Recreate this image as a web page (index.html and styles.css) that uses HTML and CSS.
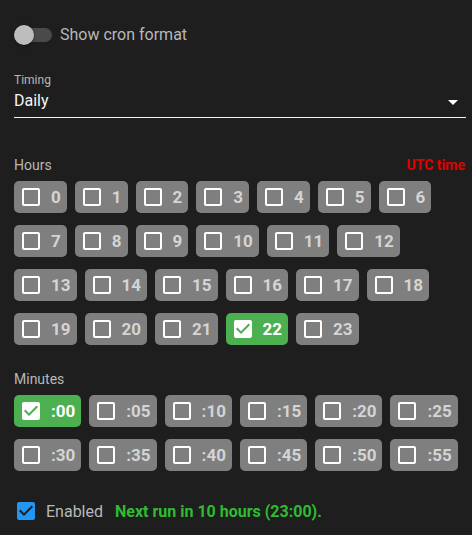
FILE: index.html
```html
<!DOCTYPE html>
<html>
<head>
<meta charset="utf-8">
<link rel="stylesheet" href="styles.css">
</head>
<body>
<div class="page">
  <div class="toggle-row">
    <span class="toggle"><span class="track"></span><span class="thumb"></span></span>
    <span class="toggle-label">Show cron format</span>
  </div>

  <div class="field">
    <div class="field-label">Timing</div>
    <div class="select">
      <span class="select-value">Daily</span>
      <svg class="arrow" viewBox="0 0 24 24" width="24" height="24"><path d="M7 10l5 5 5-5z" fill="#fff"/></svg>
    </div>
  </div>

  <div class="section-head hours-head">
    <span>Hours</span>
    <span class="utc">UTC time</span>
  </div>
  <div class="chips">
    <div class="chip"><svg class="cb" viewBox="0 0 24 24"><path d="M19 5v14H5V5h14m0-2H5c-1.1 0-2 .9-2 2v14c0 1.1.9 2 2 2h14c1.1 0 2-.9 2-2V5c0-1.1-.9-2-2-2z"/></svg><span>0</span></div>
    <div class="chip"><svg class="cb" viewBox="0 0 24 24"><path d="M19 5v14H5V5h14m0-2H5c-1.1 0-2 .9-2 2v14c0 1.1.9 2 2 2h14c1.1 0 2-.9 2-2V5c0-1.1-.9-2-2-2z"/></svg><span>1</span></div>
    <div class="chip"><svg class="cb" viewBox="0 0 24 24"><path d="M19 5v14H5V5h14m0-2H5c-1.1 0-2 .9-2 2v14c0 1.1.9 2 2 2h14c1.1 0 2-.9 2-2V5c0-1.1-.9-2-2-2z"/></svg><span>2</span></div>
    <div class="chip"><svg class="cb" viewBox="0 0 24 24"><path d="M19 5v14H5V5h14m0-2H5c-1.1 0-2 .9-2 2v14c0 1.1.9 2 2 2h14c1.1 0 2-.9 2-2V5c0-1.1-.9-2-2-2z"/></svg><span>3</span></div>
    <div class="chip"><svg class="cb" viewBox="0 0 24 24"><path d="M19 5v14H5V5h14m0-2H5c-1.1 0-2 .9-2 2v14c0 1.1.9 2 2 2h14c1.1 0 2-.9 2-2V5c0-1.1-.9-2-2-2z"/></svg><span>4</span></div>
    <div class="chip"><svg class="cb" viewBox="0 0 24 24"><path d="M19 5v14H5V5h14m0-2H5c-1.1 0-2 .9-2 2v14c0 1.1.9 2 2 2h14c1.1 0 2-.9 2-2V5c0-1.1-.9-2-2-2z"/></svg><span>5</span></div>
    <div class="chip"><svg class="cb" viewBox="0 0 24 24"><path d="M19 5v14H5V5h14m0-2H5c-1.1 0-2 .9-2 2v14c0 1.1.9 2 2 2h14c1.1 0 2-.9 2-2V5c0-1.1-.9-2-2-2z"/></svg><span>6</span></div>
    <div class="chip"><svg class="cb" viewBox="0 0 24 24"><path d="M19 5v14H5V5h14m0-2H5c-1.1 0-2 .9-2 2v14c0 1.1.9 2 2 2h14c1.1 0 2-.9 2-2V5c0-1.1-.9-2-2-2z"/></svg><span>7</span></div>
    <div class="chip"><svg class="cb" viewBox="0 0 24 24"><path d="M19 5v14H5V5h14m0-2H5c-1.1 0-2 .9-2 2v14c0 1.1.9 2 2 2h14c1.1 0 2-.9 2-2V5c0-1.1-.9-2-2-2z"/></svg><span>8</span></div>
    <div class="chip"><svg class="cb" viewBox="0 0 24 24"><path d="M19 5v14H5V5h14m0-2H5c-1.1 0-2 .9-2 2v14c0 1.1.9 2 2 2h14c1.1 0 2-.9 2-2V5c0-1.1-.9-2-2-2z"/></svg><span>9</span></div>
    <div class="chip"><svg class="cb" viewBox="0 0 24 24"><path d="M19 5v14H5V5h14m0-2H5c-1.1 0-2 .9-2 2v14c0 1.1.9 2 2 2h14c1.1 0 2-.9 2-2V5c0-1.1-.9-2-2-2z"/></svg><span>10</span></div>
    <div class="chip"><svg class="cb" viewBox="0 0 24 24"><path d="M19 5v14H5V5h14m0-2H5c-1.1 0-2 .9-2 2v14c0 1.1.9 2 2 2h14c1.1 0 2-.9 2-2V5c0-1.1-.9-2-2-2z"/></svg><span>11</span></div>
    <div class="chip"><svg class="cb" viewBox="0 0 24 24"><path d="M19 5v14H5V5h14m0-2H5c-1.1 0-2 .9-2 2v14c0 1.1.9 2 2 2h14c1.1 0 2-.9 2-2V5c0-1.1-.9-2-2-2z"/></svg><span>12</span></div>
    <div class="chip"><svg class="cb" viewBox="0 0 24 24"><path d="M19 5v14H5V5h14m0-2H5c-1.1 0-2 .9-2 2v14c0 1.1.9 2 2 2h14c1.1 0 2-.9 2-2V5c0-1.1-.9-2-2-2z"/></svg><span>13</span></div>
    <div class="chip"><svg class="cb" viewBox="0 0 24 24"><path d="M19 5v14H5V5h14m0-2H5c-1.1 0-2 .9-2 2v14c0 1.1.9 2 2 2h14c1.1 0 2-.9 2-2V5c0-1.1-.9-2-2-2z"/></svg><span>14</span></div>
    <div class="chip"><svg class="cb" viewBox="0 0 24 24"><path d="M19 5v14H5V5h14m0-2H5c-1.1 0-2 .9-2 2v14c0 1.1.9 2 2 2h14c1.1 0 2-.9 2-2V5c0-1.1-.9-2-2-2z"/></svg><span>15</span></div>
    <div class="chip"><svg class="cb" viewBox="0 0 24 24"><path d="M19 5v14H5V5h14m0-2H5c-1.1 0-2 .9-2 2v14c0 1.1.9 2 2 2h14c1.1 0 2-.9 2-2V5c0-1.1-.9-2-2-2z"/></svg><span>16</span></div>
    <div class="chip"><svg class="cb" viewBox="0 0 24 24"><path d="M19 5v14H5V5h14m0-2H5c-1.1 0-2 .9-2 2v14c0 1.1.9 2 2 2h14c1.1 0 2-.9 2-2V5c0-1.1-.9-2-2-2z"/></svg><span>17</span></div>
    <div class="chip"><svg class="cb" viewBox="0 0 24 24"><path d="M19 5v14H5V5h14m0-2H5c-1.1 0-2 .9-2 2v14c0 1.1.9 2 2 2h14c1.1 0 2-.9 2-2V5c0-1.1-.9-2-2-2z"/></svg><span>18</span></div>
    <div class="chip"><svg class="cb" viewBox="0 0 24 24"><path d="M19 5v14H5V5h14m0-2H5c-1.1 0-2 .9-2 2v14c0 1.1.9 2 2 2h14c1.1 0 2-.9 2-2V5c0-1.1-.9-2-2-2z"/></svg><span>19</span></div>
    <div class="chip"><svg class="cb" viewBox="0 0 24 24"><path d="M19 5v14H5V5h14m0-2H5c-1.1 0-2 .9-2 2v14c0 1.1.9 2 2 2h14c1.1 0 2-.9 2-2V5c0-1.1-.9-2-2-2z"/></svg><span>20</span></div>
    <div class="chip"><svg class="cb" viewBox="0 0 24 24"><path d="M19 5v14H5V5h14m0-2H5c-1.1 0-2 .9-2 2v14c0 1.1.9 2 2 2h14c1.1 0 2-.9 2-2V5c0-1.1-.9-2-2-2z"/></svg><span>21</span></div>
    <div class="chip on"><svg class="cb" viewBox="0 0 24 24"><path fill-rule="evenodd" d="M19 3H5c-1.11 0-2 .9-2 2v14c0 1.1.89 2 2 2h14c1.11 0 2-.9 2-2V5c0-1.1-.89-2-2-2zm-9 14l-5-5 1.41-1.41L10 14.17l7.59-7.59L19 8l-9 9z"/></svg><span>22</span></div>
    <div class="chip"><svg class="cb" viewBox="0 0 24 24"><path d="M19 5v14H5V5h14m0-2H5c-1.1 0-2 .9-2 2v14c0 1.1.9 2 2 2h14c1.1 0 2-.9 2-2V5c0-1.1-.9-2-2-2z"/></svg><span>23</span></div>
  </div>

  <div class="section-head minutes-head"><span>Minutes</span></div>
  <div class="chips">
    <div class="chip on"><svg class="cb" viewBox="0 0 24 24"><path fill-rule="evenodd" d="M19 3H5c-1.11 0-2 .9-2 2v14c0 1.1.89 2 2 2h14c1.11 0 2-.9 2-2V5c0-1.1-.89-2-2-2zm-9 14l-5-5 1.41-1.41L10 14.17l7.59-7.59L19 8l-9 9z"/></svg><span>:00</span></div>
    <div class="chip"><svg class="cb" viewBox="0 0 24 24"><path d="M19 5v14H5V5h14m0-2H5c-1.1 0-2 .9-2 2v14c0 1.1.9 2 2 2h14c1.1 0 2-.9 2-2V5c0-1.1-.9-2-2-2z"/></svg><span>:05</span></div>
    <div class="chip"><svg class="cb" viewBox="0 0 24 24"><path d="M19 5v14H5V5h14m0-2H5c-1.1 0-2 .9-2 2v14c0 1.1.9 2 2 2h14c1.1 0 2-.9 2-2V5c0-1.1-.9-2-2-2z"/></svg><span>:10</span></div>
    <div class="chip"><svg class="cb" viewBox="0 0 24 24"><path d="M19 5v14H5V5h14m0-2H5c-1.1 0-2 .9-2 2v14c0 1.1.9 2 2 2h14c1.1 0 2-.9 2-2V5c0-1.1-.9-2-2-2z"/></svg><span>:15</span></div>
    <div class="chip"><svg class="cb" viewBox="0 0 24 24"><path d="M19 5v14H5V5h14m0-2H5c-1.1 0-2 .9-2 2v14c0 1.1.9 2 2 2h14c1.1 0 2-.9 2-2V5c0-1.1-.9-2-2-2z"/></svg><span>:20</span></div>
    <div class="chip"><svg class="cb" viewBox="0 0 24 24"><path d="M19 5v14H5V5h14m0-2H5c-1.1 0-2 .9-2 2v14c0 1.1.9 2 2 2h14c1.1 0 2-.9 2-2V5c0-1.1-.9-2-2-2z"/></svg><span>:25</span></div>
    <div class="chip"><svg class="cb" viewBox="0 0 24 24"><path d="M19 5v14H5V5h14m0-2H5c-1.1 0-2 .9-2 2v14c0 1.1.9 2 2 2h14c1.1 0 2-.9 2-2V5c0-1.1-.9-2-2-2z"/></svg><span>:30</span></div>
    <div class="chip"><svg class="cb" viewBox="0 0 24 24"><path d="M19 5v14H5V5h14m0-2H5c-1.1 0-2 .9-2 2v14c0 1.1.9 2 2 2h14c1.1 0 2-.9 2-2V5c0-1.1-.9-2-2-2z"/></svg><span>:35</span></div>
    <div class="chip"><svg class="cb" viewBox="0 0 24 24"><path d="M19 5v14H5V5h14m0-2H5c-1.1 0-2 .9-2 2v14c0 1.1.9 2 2 2h14c1.1 0 2-.9 2-2V5c0-1.1-.9-2-2-2z"/></svg><span>:40</span></div>
    <div class="chip"><svg class="cb" viewBox="0 0 24 24"><path d="M19 5v14H5V5h14m0-2H5c-1.1 0-2 .9-2 2v14c0 1.1.9 2 2 2h14c1.1 0 2-.9 2-2V5c0-1.1-.9-2-2-2z"/></svg><span>:45</span></div>
    <div class="chip"><svg class="cb" viewBox="0 0 24 24"><path d="M19 5v14H5V5h14m0-2H5c-1.1 0-2 .9-2 2v14c0 1.1.9 2 2 2h14c1.1 0 2-.9 2-2V5c0-1.1-.9-2-2-2z"/></svg><span>:50</span></div>
    <div class="chip"><svg class="cb" viewBox="0 0 24 24"><path d="M19 5v14H5V5h14m0-2H5c-1.1 0-2 .9-2 2v14c0 1.1.9 2 2 2h14c1.1 0 2-.9 2-2V5c0-1.1-.9-2-2-2z"/></svg><span>:55</span></div>
  </div>

  <div class="footer">
    <svg class="enabled-cb" viewBox="0 0 24 24"><path fill-rule="evenodd" d="M19 3H5c-1.11 0-2 .9-2 2v14c0 1.1.89 2 2 2h14c1.11 0 2-.9 2-2V5c0-1.1-.89-2-2-2zm-9 14l-5-5 1.41-1.41L10 14.17l7.59-7.59L19 8l-9 9z"/></svg>
    <span class="enabled-label">Enabled</span>
    <span class="next-run">Next run in 10 hours (23:00).</span>
  </div>
</div>
</body>
</html>
```

FILE: styles.css
```css
html, body {
  margin: 0;
  padding: 0;
  background: #1e1e1e;
}

body {
  font-family: Roboto, "Noto Sans", "Liberation Sans", sans-serif;
  color: #e0e0e0;
}

.page {
  padding: 25px 6px 0 14px;
}

.toggle-row {
  display: flex;
  align-items: center;
  height: 20px;
}

.toggle {
  position: relative;
  width: 38px;
  height: 20px;
  flex: none;
}

.track {
  position: absolute;
  left: 0;
  top: 3px;
  width: 38px;
  height: 14px;
  border-radius: 7px;
  background: #4a4a4a;
}

.thumb {
  position: absolute;
  left: 0;
  top: 0;
  width: 20px;
  height: 20px;
  border-radius: 50%;
  background: #bdbdbd;
  box-shadow: 0 1px 3px rgba(0, 0, 0, 0.4);
}

.toggle-label {
  margin-left: 8px;
  font-size: 16px;
  line-height: 20px;
  color: #b8b8b8;
}

.field {
  margin-top: 28px;
}

.field-label {
  font-size: 12px;
  line-height: 14px;
  color: #b8b8b8;
}

.select {
  display: flex;
  align-items: flex-start;
  justify-content: space-between;
  height: 25px;
  margin-top: 5px;
  border-bottom: 1px solid #f2f2f2;
}

.select-value {
  font-size: 16px;
  line-height: 18px;
  color: #f5f5f5;
}

.arrow {
  margin-top: -2px;
  margin-right: 1px;
  flex: none;
}

.section-head {
  display: flex;
  justify-content: space-between;
  font-size: 14px;
  line-height: 16px;
  color: #b8b8b8;
}

.hours-head {
  margin-top: 39px;
}

.minutes-head {
  margin-top: 26px;
}

.utc {
  color: #e00000;
  font-weight: 700;
  margin-right: 1px;
}

.chips {
  display: flex;
  flex-wrap: wrap;
  gap: 12px 8px;
  margin-top: 8px;
}

.chip {
  display: flex;
  align-items: center;
  height: 32px;
  padding: 0 6px 0 5px;
  border-radius: 5px;
  background: #7f7f7f;
  color: #d4d4d4;
  font-size: 17px;
  font-weight: 700;
}

.chip .cb {
  width: 24px;
  height: 24px;
  margin-right: 8px;
  fill: #ffffff;
  flex: none;
}

.chip.on {
  background: #4caf50;
  color: #ffffff;
}

.footer {
  display: flex;
  align-items: center;
  height: 24px;
  margin-top: 28px;
}

.enabled-cb {
  width: 24px;
  height: 24px;
  fill: #2196f3;
  flex: none;
}

.enabled-label {
  margin-left: 8px;
  font-size: 16px;
  color: #b8b8b8;
}

.next-run {
  margin-left: 12px;
  font-size: 16px;
  font-weight: 700;
  color: #2ebd2e;
}
```
